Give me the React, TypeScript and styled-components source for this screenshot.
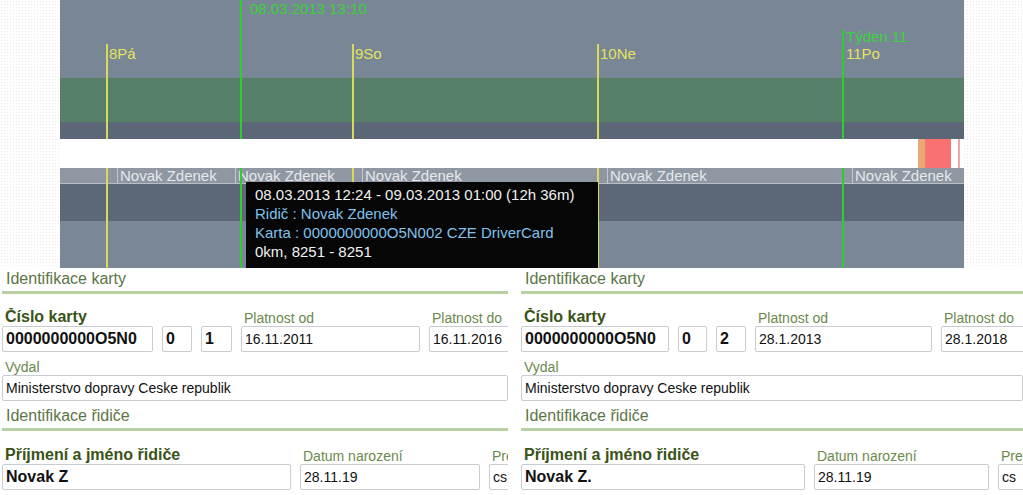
import styled, { createGlobalStyle } from "styled-components";

const GlobalStyle = createGlobalStyle`
  html, body {
    margin: 0;
    padding: 0;
    background: #fff;
  }
  body {
    font-family: "Liberation Sans", Arial, sans-serif;
    overflow: hidden;
  }
`;

const Page = styled.div`
  width: 1023px;
  height: 495px;
  display: flex;
  flex-direction: column;
  overflow: hidden;
`;

/* ---------- timeline ---------- */

const TopArea = styled.div`
  height: 268px;
  flex-shrink: 0;
  display: flex;
  background-color: #fff;
  background-image: radial-gradient(#ebebeb 0.7px, transparent 0.9px);
  background-size: 3px 3px;
`;

const Timeline = styled.div`
  position: relative;
  margin-left: 60px;
  width: 904px;
  display: flex;
  flex-direction: column;
`;

const Band = styled.div<{ $h: number; $bg: string }>`
  height: ${(p) => p.$h}px;
  background: ${(p) => p.$bg};
  flex-shrink: 0;
`;

const WhiteRow = styled.div`
  height: 29px;
  flex-shrink: 0;
  background: #fff;
  position: relative;
  z-index: 2;
`;

const EventBlock = styled.div<{ $x: number; $w: number; $c: string }>`
  position: absolute;
  top: 0;
  bottom: 0;
  left: ${(p) => p.$x}px;
  width: ${(p) => p.$w}px;
  background: ${(p) => p.$c};
`;

const NameRow = styled.div`
  height: 16px;
  flex-shrink: 0;
  box-sizing: border-box;
  background: #8e97a2;
  border-bottom: 1px solid #b8bec6;
  position: relative;
`;

const NameTag = styled.span<{ $x: number }>`
  position: absolute;
  top: 0;
  bottom: 0;
  left: ${(p) => p.$x}px;
  border-left: 1px solid #c3c8ce;
  padding-left: 2px;
  font-size: 15px;
  line-height: 16px;
  color: #e6e9ec;
  white-space: nowrap;
`;

const TickLine = styled.div<{ $x: number; $top: number; $c: string }>`
  position: absolute;
  left: ${(p) => p.$x}px;
  top: ${(p) => p.$top}px;
  bottom: 0;
  width: 2px;
  background: ${(p) => p.$c};
  z-index: 1;
`;

const TickLabel = styled.span<{ $x: number; $top: number; $c: string }>`
  position: absolute;
  left: ${(p) => p.$x}px;
  top: ${(p) => p.$top}px;
  font-size: 15px;
  line-height: 17px;
  color: ${(p) => p.$c};
  white-space: nowrap;
  z-index: 3;
`;

const Tooltip = styled.div`
  position: absolute;
  left: 186px;
  top: 182px;
  width: 352px;
  height: 86px;
  box-sizing: border-box;
  padding: 3px 9px;
  background: #060606;
  z-index: 5;
  font-size: 15px;
  line-height: 19px;
  white-space: nowrap;
`;

const TipLine = styled.div<{ $blue?: boolean }>`
  color: ${(p) => (p.$blue ? "#80c2ec" : "#f2f2f2")};
`;

/* ---------- card panels ---------- */

const BottomArea = styled.div`
  flex: 1;
  display: flex;
`;

const Panel = styled.div<{ $w: number; $ml: number }>`
  width: ${(p) => p.$w}px;
  margin-left: ${(p) => p.$ml}px;
  padding-left: 2px;
  box-sizing: border-box;
  overflow: hidden;
  display: flex;
  flex-direction: column;
  flex-shrink: 0;
`;

const SectionTitle = styled.div<{ $mt?: number }>`
  margin-top: ${(p) => p.$mt ?? 0}px;
  height: 22px;
  padding-left: 4px;
  font-size: 16px;
  line-height: 22px;
  color: #5c7547;
  white-space: nowrap;
`;

const Rule = styled.div`
  margin-top: 1px;
  height: 3px;
  background: #b9d1a5;
`;

const FieldGrid = styled.div<{ $cols: string; $mt: number }>`
  margin-top: ${(p) => p.$mt}px;
  display: grid;
  grid-template-columns: ${(p) => p.$cols};
  column-gap: 9px;
  align-items: end;
`;

const Label = styled.div<{ $bold?: boolean; $span?: number; $mt?: number }>`
  grid-column: span ${(p) => p.$span ?? 1};
  margin-top: ${(p) => p.$mt ?? 0}px;
  padding-left: 3px;
  font-size: ${(p) => (p.$bold ? 16 : 14)}px;
  font-weight: ${(p) => (p.$bold ? 700 : 400)};
  line-height: ${(p) => (p.$bold ? 18 : 16)}px;
  color: ${(p) => (p.$bold ? "#3a5317" : "#6b8a4d")};
  white-space: nowrap;
  overflow: hidden;
`;

const Input = styled.div<{ $bold?: boolean }>`
  height: 26px;
  box-sizing: border-box;
  border: 1px solid #c8cdd3;
  border-radius: 2px;
  background: #fff;
  padding-left: 3px;
  display: flex;
  align-items: center;
  font-size: ${(p) => (p.$bold ? 16 : 14)}px;
  font-weight: ${(p) => (p.$bold ? 700 : 400)};
  color: #111;
  white-space: nowrap;
  overflow: hidden;
`;

interface CardData {
  width: number;
  marginLeft: number;
  cardCols: string;
  driverCols: string;
  version: string;
  from: string;
  to: string;
  name: string;
}

const cards: CardData[] = [
  {
    width: 508,
    marginLeft: 0,
    cardCols: "151px 30px 31px 179px 90px",
    driverCols: "289px 180px 60px",
    version: "1",
    from: "16.11.2011",
    to: "16.11.2016",
    name: "Novak Z",
  },
  {
    width: 504,
    marginLeft: 11,
    cardCols: "148px 29px 30px 177px 90px",
    driverCols: "284px 175px 60px",
    version: "2",
    from: "28.1.2013",
    to: "28.1.2018",
    name: "Novak Z.",
  },
];

function CardPanel({ card }: { card: CardData }) {
  return (
    <Panel $w={card.width} $ml={card.marginLeft}>
      <SectionTitle>Identifikace karty</SectionTitle>
      <Rule />
      <FieldGrid $cols={card.cardCols} $mt={14}>
        <Label $bold $span={3}>Číslo karty</Label>
        <Label>Platnost od</Label>
        <Label>Platnost do</Label>
        <Input $bold>0000000000O5N0</Input>
        <Input $bold>0</Input>
        <Input $bold>{card.version}</Input>
        <Input>{card.from}</Input>
        <Input>{card.to}</Input>
      </FieldGrid>
      <Label $mt={7}>Vydal</Label>
      <Input>Ministerstvo dopravy Ceske republik</Input>
      <SectionTitle $mt={4}>Identifikace řidiče</SectionTitle>
      <Rule />
      <FieldGrid $cols={card.driverCols} $mt={15}>
        <Label $bold>Příjmení a jméno řidiče</Label>
        <Label>Datum narození</Label>
        <Label>Preferovaný jazyk</Label>
        <Input $bold>{card.name}</Input>
        <Input>28.11.19</Input>
        <Input>cs</Input>
      </FieldGrid>
    </Panel>
  );
}

const YELLOW = "#d8da5e";
const GREEN = "#2fcd2f";

const ticks = [
  { x: 46, top: 44, color: YELLOW },
  { x: 292, top: 44, color: YELLOW },
  { x: 537, top: 44, color: YELLOW },
  { x: 180, top: 0, color: GREEN },
  { x: 782, top: 30, color: GREEN },
];

const labels = [
  { x: 190, top: 0, color: "#3ad43a", text: "08.03.2013 13:10" },
  { x: 49, top: 45, color: "#e4e45c", text: "8Pá" },
  { x: 295, top: 45, color: "#e4e45c", text: "9So" },
  { x: 540, top: 45, color: "#e4e45c", text: "10Ne" },
  { x: 786, top: 28, color: "#3ad43a", text: "Týden 11" },
  { x: 786, top: 45, color: "#e4e45c", text: "11Po" },
];

const names = [57, 175, 302, 547, 792];

function App() {
  return (
    <Page>
      <GlobalStyle />
      <TopArea>
        <Timeline>
          <Band $h={78} $bg="#798696" />
          <Band $h={44} $bg="#57806a" />
          <Band $h={17} $bg="#5b6676" />
          <WhiteRow>
            <EventBlock $x={858} $w={7} $c="#eaa877" />
            <EventBlock $x={865} $w={26} $c="#f87272" />
            <EventBlock $x={898} $w={2} $c="#f4a4a4" />
          </WhiteRow>
          <NameRow>
            {names.map((x) => (
              <NameTag key={x} $x={x}>Novak Zdenek</NameTag>
            ))}
          </NameRow>
          <Band $h={37} $bg="#5c6777" />
          <Band $h={47} $bg="#7a8797" />

          {ticks.map((t) => (
            <TickLine key={t.x} $x={t.x} $top={t.top} $c={t.color} />
          ))}
          {labels.map((l) => (
            <TickLabel key={l.text} $x={l.x} $top={l.top} $c={l.color}>
              {l.text}
            </TickLabel>
          ))}

          <Tooltip>
            <TipLine>08.03.2013 12:24 - 09.03.2013 01:00 (12h 36m)</TipLine>
            <TipLine $blue>Ridič : Novak Zdenek</TipLine>
            <TipLine $blue>Karta : 0000000000O5N002 CZE DriverCard</TipLine>
            <TipLine>0km, 8251 - 8251</TipLine>
          </Tooltip>
        </Timeline>
      </TopArea>
      <BottomArea>
        {cards.map((c) => (
          <CardPanel key={c.version} card={c} />
        ))}
      </BottomArea>
    </Page>
  );
}

export default App;
